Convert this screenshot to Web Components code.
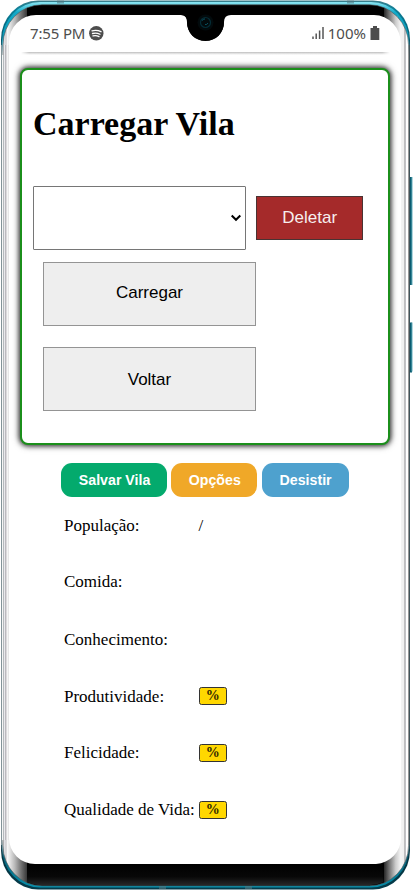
<!DOCTYPE html>
<html lang="pt-BR">
<head>
<meta charset="utf-8">
<title>Carregar Vila</title>
<style>
body{margin:0;background:#fff;color:#000;font-family:"Liberation Serif",serif;overflow:hidden}
</style>
</head>
<body>
<village-app></village-app>
<script>
class BaseElement extends HTMLElement{
  connectedCallback(){
    if(this.shadowRoot)return;
    const t=document.createElement('template');
    t.innerHTML=this.render();
    this.attachShadow({mode:'open'}).append(t.content.cloneNode(true));
  }
}
customElements.define('phone-shell',class extends BaseElement{render(){return `
<style>
:host{display:grid;width:413px;height:890px;overflow:hidden}
svg,.screen{grid-area:1/1;min-width:0}
.screen{box-sizing:border-box;padding:15px 12px 26px 9px;display:flex;flex-direction:column;z-index:1}
</style>
<svg width="413" height="890" viewBox="0 0 413 890">
<defs>
<linearGradient id="rim" x1="0" y1="0" x2="0" y2="1">
<stop offset="0" stop-color="#3c7e8a"/><stop offset=".01" stop-color="#0b7f98"/><stop offset=".045" stop-color="#06586b"/><stop offset=".07" stop-color="#87989f"/><stop offset=".16" stop-color="#87989f"/><stop offset=".2" stop-color="#6c8088"/><stop offset=".5" stop-color="#84949a"/><stop offset=".93" stop-color="#8da0a6"/><stop offset=".96" stop-color="#04323e"/><stop offset="1" stop-color="#053c4b"/>
</linearGradient>
<linearGradient id="glow" gradientUnits="userSpaceOnUse" x1="0" y1="2" x2="0" y2="888">
<stop offset="0" stop-color="#8de6f2"/><stop offset=".004" stop-color="#5fd3e6"/><stop offset=".012" stop-color="#12a9c8"/><stop offset=".04" stop-color="#0a98b6"/><stop offset=".06" stop-color="#f0f0f0"/><stop offset=".945" stop-color="#e8e8e8"/><stop offset=".965" stop-color="#05637a"/><stop offset="1" stop-color="#0590ad"/>
</linearGradient>
<linearGradient id="body" gradientUnits="userSpaceOnUse" x1="0" y1="0" x2="413" y2="0">
<stop offset=".0085" stop-color="#d4d4d8"/><stop offset=".0125" stop-color="#e9e9ec"/><stop offset=".014" stop-color="#c4c2c6"/><stop offset=".018" stop-color="#f8f8f8"/><stop offset=".024" stop-color="#e4e4e4"/><stop offset=".036" stop-color="#b8b8b8"/><stop offset=".05" stop-color="#777"/><stop offset=".0654" stop-color="#383838"/><stop offset=".0655" stop-color="#000"/>
<stop offset=".929" stop-color="#000"/><stop offset=".9291" stop-color="#222"/><stop offset=".945" stop-color="#808080"/><stop offset=".958" stop-color="#ccc"/><stop offset=".97" stop-color="#f4f4f4"/><stop offset=".977" stop-color="#f0f0f0"/><stop offset=".9775" stop-color="#bbb"/><stop offset=".983" stop-color="#c4c4c8"/><stop offset=".984" stop-color="#fff"/><stop offset="1" stop-color="#fff"/>
</linearGradient>
<linearGradient id="foot" x1="0" y1="0" x2="0" y2="1"><stop offset="0" stop-color="#000"/><stop offset=".6" stop-color="#080808"/><stop offset="1" stop-color="#282828"/></linearGradient>
</defs>
<path d="M409 177h3v108h-3zM409 322.500h3v50h-3z" fill="#0b5c70"/>
<path d="M412 177v108M412 322.500v49" stroke="#62aebd"/>
<rect x="1" y="0.500" width="409" height="889" rx="37" ry="39" fill="url(#rim)"/>
<rect x="2" y="2" width="407" height="885.500" rx="38" ry="39" fill="url(#glow)"/>
<rect x="3" y="4.800" width="405.500" height="881" rx="39" ry="40" fill="url(#body)" stroke="#555" stroke-width=".6"/>
<path d="M57 .5h7v3h-7zM347 .5h7v3h-7zM159 886h7v3h-7zM245 886h7v3h-7z" fill="#52777f" opacity=".6"/>
<path d="M409.500 45V845" stroke="#3f5359"/>
<path d="M1.500 45V845" stroke="#829398"/><path d="M2.500 55V840" stroke="#f5f5f5"/><path d="M3.500 55V840" stroke="#b4b9bc"/><path d="M4.500 45V840" stroke="#e9e9ec"/><path d="M5.500 45V840" stroke="#bbb9be"/><path d="M7.500 45V840" stroke="#f5f5f5"/>
<path d="M27 864H383.500V882Q376 885.300 369 885.300H42Q33 885 27 882Z" fill="url(#foot)"/>
<path d="M36 15H181Q186 15 187 20V22C187 33 195 40.500 205.500 40.500C216 40.500 224 33 224 22V20Q224 15 229 15H374A27 29 0 0 1 401 44V838A27 26 0 0 1 376 864H35A26 26 0 0 1 9 838V42A27 27 0 0 1 36 15Z" fill="#fff"/>
<path d="M181 15Q187 15 187 22C187 33 195 41 205.500 41C216 41 224 33 224 22Q224 15 231 15Z" fill="#000"/>
<circle cx="205.500" cy="22.500" r="8" fill="#020a0c"/><circle cx="205.500" cy="22.500" r="5" fill="none" stroke="#042c36" stroke-width="1.200"/><path d="M202 20.500q2-2 3-1.500M205 24.500q2 .5 3-1.500" stroke="#0a5362" fill="none"/>
<path d="M8.500 45V840" stroke="#e6e6e6"/>
</svg>
<div class="screen"><slot></slot></div>`}});

customElements.define('status-bar',class extends BaseElement{render(){return `
<style>
:host{display:flex;align-items:flex-start;box-sizing:border-box;height:38px;margin:0 11px 0 12px;padding:8px 10px 0 9px;color:#4d4d4d;font:15px/20px "Noto Sans",sans-serif;position:relative}
:host::after{content:"";position:absolute;left:0;right:0;bottom:-2px;height:3px;background:linear-gradient(#bdbdbd,#e9e9e9 60%,#fff);-webkit-mask:linear-gradient(90deg,transparent,#000 8px,#000 calc(100% - 8px),transparent);mask:linear-gradient(90deg,transparent,#000 8px,#000 calc(100% - 8px),transparent)}
span{white-space:nowrap}.time{width:59px;letter-spacing:-.15px}.sig{margin:3px 4px 0 auto}.bat{margin:3px 0 0 4px}svg{flex:none}
.spot{margin-top:3px}
</style>
<span class="time">7:55 PM</span>
<svg class="spot" width="15" height="15" viewBox="0 0 15 15"><circle cx="7.300" cy="7.300" r="7.200" fill="#4d4d4d"/><path d="M3 4.800q4.800-1.300 9 .9M3.500 7.500q4-1.100 7.500.8M4 9.900q3.300-.8 6 .7" stroke="#fff" stroke-width="1.300" stroke-linecap="round" fill="none"/></svg>
<svg class="sig" width="12" height="14" viewBox="0 0 12 14"><path d="M1 10.500v2.500M4.200 7.500V13M7.600 4.500V13M11 1v12" stroke="#555" stroke-width="1.500"/></svg>
<span>100%</span>
<svg class="bat" width="10" height="14" viewBox="0 0 10 14"><path d="M3 0h4v2h2.300v12H.5V2H3z" fill="#4d4d4d"/></svg>`}});

customElements.define('load-card',class extends BaseElement{render(){return `
<style>
:host{display:block;box-sizing:border-box;width:370px;height:377px;margin:15px 0 0 11.300px;padding:0 10.700px;background:#fff;border:2px solid #1b8f1b;border-radius:8px;box-shadow:0 0 5px 1px #333,0 0 9px #aaa}
</style><slot></slot>`}});

customElements.define('card-title',class extends BaseElement{render(){return `
<style>:host{display:block}h1{font-size:34px;line-height:40px;margin:0;padding:34px 0 42px;font-weight:bold;white-space:nowrap}</style><h1><slot></slot></h1>`}});

customElements.define('village-picker',class extends BaseElement{render(){return `
<style>
:host{display:flex;align-items:center;gap:10px}
.select{box-sizing:border-box;width:213px;height:64px;border:1px solid #767676;border-radius:1px;background:#fff;display:flex;align-items:center;justify-content:flex-end;padding-right:3px}
</style>
<div class="select" role="combobox"><svg width="12" height="8" viewBox="0 0 12 8"><path d="M1.700 1.500L6 5.800l4.300-4.300" fill="none" stroke="#000" stroke-width="2"/></svg></div>
<slot></slot>`}});

customElements.define('action-button',class extends BaseElement{render(){return `
<style>
:host{display:block;width:213px;height:64px;margin:12px 0 0 10px}
:host([danger]){width:107.500px;height:44px;margin:0}
:host([second]){margin-top:21px}
button{box-sizing:border-box;width:100%;height:100%;font:17px/20px "Liberation Sans",sans-serif;color:#000;background:#eee;border:1px solid #949494;border-radius:0;padding:0}
:host(:not([danger]):not([second])) button{padding-bottom:2px}
:host([second]) button{padding-top:2px}
:host([danger]) button{background:#a52a2a;color:#f7eeee;border:1.500px solid #493333}
</style><button><slot></slot></button>`}});

customElements.define('pill-bar',class extends BaseElement{render(){return `<style>:host{display:flex;gap:4.300px;margin:18px 0 0 52.400px}</style><slot></slot>`}});
customElements.define('pill-button',class extends BaseElement{render(){return `
<style>
:host{display:block;width:var(--w);height:34px}
button{width:100%;height:100%;border:0;border-radius:11px;background:var(--bg);color:#fff;font:bold 14.200px/20px "Liberation Sans",sans-serif;padding:0 0 0 .6px;white-space:nowrap}
</style><button><slot></slot></button>`}});

customElements.define('stat-list',class extends BaseElement{render(){return `<style>:host{display:flex;flex-direction:column;gap:36.800px;margin:19px 0 0 55px}</style><slot></slot>`}});
customElements.define('stat-row',class extends BaseElement{render(){return `
<style>:host{display:grid;grid-template-columns:134.500px 40px;height:20px;font-size:17px;line-height:20px;white-space:nowrap}</style>
<span><slot></slot></span><span><slot name="value"></slot></span>`}});
customElements.define('percent-badge',class extends BaseElement{render(){return `
<style>:host{display:block;box-sizing:border-box;width:28.500px;height:18.500px;margin-top:.7px;border:1px solid #333;border-radius:2.500px;background:gold;color:#302700;font-weight:bold;font-size:14px;line-height:15px;text-align:center}</style><slot></slot>`}});

customElements.define('village-app',class extends BaseElement{render(){return `
<style>:host{display:block}.up{margin:-.7px 0 .7px}.down{margin:.5px 0 -.5px}.down percent-badge{margin-top:-.3px}</style>
<phone-shell>
<status-bar></status-bar>
<load-card>
<card-title>Carregar Vila</card-title>
<village-picker><action-button danger>Deletar</action-button></village-picker>
<action-button>Carregar</action-button>
<action-button second>Voltar</action-button>
</load-card>
<pill-bar>
<pill-button style="--w:105.800px;--bg:#04aa6d">Salvar Vila</pill-button>
<pill-button style="--w:86px;--bg:#f0a828">Opções</pill-button>
<pill-button style="--w:87px;--bg:#4ea1ce">Desistir</pill-button>
</pill-bar>
<stat-list>
<stat-row>População:<span slot="value">/</span></stat-row>
<stat-row class="up">Comida:</stat-row>
<stat-row>Conhecimento:</stat-row>
<stat-row class="down">Produtividade:<percent-badge slot="value">%</percent-badge></stat-row>
<stat-row>Felicidade:<percent-badge slot="value">%</percent-badge></stat-row>
<stat-row>Qualidade de Vida:<percent-badge slot="value">%</percent-badge></stat-row>
</stat-list>
</phone-shell>`}});
</script>
</body>
</html>
